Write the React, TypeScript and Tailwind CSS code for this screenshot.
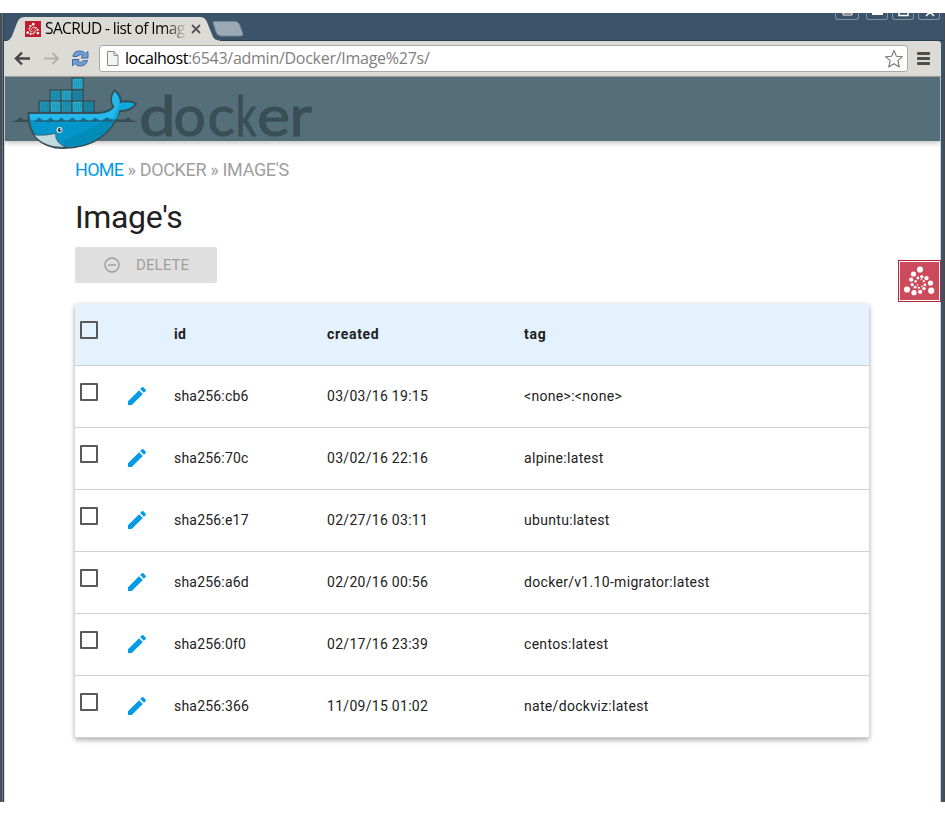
import React from "react";

const rows = [
  ["sha256:cb6", "03/03/16 19:15", "<none>:<none>"],
  ["sha256:70c", "03/02/16 22:16", "alpine:latest"],
  ["sha256:e17", "02/27/16 03:11", "ubuntu:latest"],
  ["sha256:a6d", "02/20/16 00:56", "docker/v1.10-migrator:latest"],
  ["sha256:0f0", "02/17/16 23:39", "centos:latest"],
  ["sha256:366", "11/09/15 01:02", "nate/dockviz:latest"],
];

const cols = "grid grid-cols-[45px_49px_153px_197px_1fr]";

const swirlDots = [
  [19.5, 7.5, 3.1], [13, 12, 2.6], [10.7, 17.7, 2.1], [11.7, 22.6, 1.6], [14.6, 25.2, 1.4], [18.3, 25.8, 1.1],
  [6.5, 27.5, 3.1], [13.5, 30.7, 2.6], [19.7, 29.8, 2.1], [23.5, 26.6, 1.7], [24.4, 22.8, 1.4], [23.2, 19.2, 1.1],
  [30.7, 28.7, 3.1], [30, 21, 2.6], [26, 16.2, 2.1], [21.3, 14.8, 1.7], [17.4, 16, 1.4], [15.1, 19.3, 1.2],
  [20.8, 17.5, 0.8], [17, 23, 0.8], [21.5, 24.3, 0.9],
];

function Swirl({ className }: { className: string }) {
  return (
    <svg viewBox="0 0 38 38" className={className}>
      {swirlDots.map(([x, y, r], i) => (
        <circle key={i} cx={x} cy={y} r={r} fill="#fff" />
      ))}
    </svg>
  );
}

function Box() {
  return <span className="ml-[5px] mt-[17px] block h-[18px] w-[18px] rounded-[1px] border-2 border-[#5a5a5a]" />;
}

function DockerLogo() {
  const crates = [
    [72, 78, "#27b2d4"],
    [50, 90, "#1e96b5"], [61, 90, "#27a9cb"], [72, 90, "#1b85a3"],
    [39, 101, "#1e96b5"], [50, 101, "#27b2d4"], [61, 101, "#1e96b5"], [72, 101, "#27b2d4"], [83, 101, "#1b85a3"],
  ] as const;
  return (
    <svg width="320" height="83" viewBox="0 77 320 83" className="absolute left-[-5px] top-0 z-10">
      <path d="M12 121.300Q17 121 20.500 117Q23 121 27 119.500H121Q126 120 128 117Q131 121 137 121.300V122H12Z" fill="#394d54" />
      {crates.map(([x, y, c], i) => (
        <g key={i}>
          <rect x={x} y={y} width="11.200" height="11.400" fill={c} stroke="#394d54" strokeWidth="1.300" />
          <path d={`M${x + 2.8} ${y + 2}v7.500m2-7.500v7.500m2-7.500v7.500m2-7.500v7.500`} stroke="#147893" strokeWidth=".6" />
        </g>
      ))}
      <path d="M28.500 113H98Q108 112.500 113.500 107C109.500 101 111.500 94 114.500 90.500Q120.500 94 121 102Q129 100 136 103.500Q132 111 120 111C112 133 94 148.200 63 148.200C40 148 28 134 28.500 113Z" fill="#0495cb" stroke="#394d54" strokeWidth="1.800" />
      <path d="M63 147C93 147 110 133 118 111L112 112Q105 124 65 140Z" fill="#008bb8" />
      <path d="M29.500 114H98Q111 113 114.500 107C110.500 101 112 95 114.700 92Q119.500 96 119.500 104Q128 101.500 134 104Q130 109.500 119.500 109.500L117 118.500Q111 120 106.500 117Q101 123 95.500 117.500Q89 123 83.500 117.500Q78 123 72.500 117.500Q66 123 61.500 117.500Q56 123 50.500 117.500Q45 123 39 117.500Q34 122 30 119Z" fill="#24b8eb" />
      <path d="M119 105Q128 101.500 134 104Q130 109.500 119 109.500L117 118L113 119Z" fill="#0ba8de" />
      <path d="M29 121.500Q35 122.500 39 118Q45 123.500 50.500 118Q56 123.500 61.500 118Q66 123.500 72.500 118Q78 123.500 83.500 118Q89 123.500 95.500 118Q101 123.500 106.500 118Q111 121 116 120.500L115.500 121.800H29Z" fill="#24627a" />
      <path d="M34 135Q46 136 55.500 133.500Q55 143 66 147C52 148 41 144 34 135Z" fill="#bfdbe0" stroke="#394d54" strokeWidth=".7" />
      <circle cx="59.500" cy="130" r="3" fill="#d7e8ec" />
      <circle cx="59.700" cy="130" r="1.900" fill="#283e48" />
      <circle cx="60.500" cy="129.400" r=".6" fill="#fff" />
      <g className="font-['Lato']" fontSize="57" fill="#3a4e55" stroke="#3a4e55" strokeWidth="1" strokeLinejoin="round">
        <text transform="translate(139 135.500) scale(1.150 1)">d</text>
        <text x="173.500" y="135.500">o</text>
        <text x="207.500" y="135.500">c</text>
        <text transform="translate(236 135.500) scale(.7 1)">k</text>
        <text transform="translate(257 135.500) scale(1.100 1)">e</text>
        <text transform="translate(289.500 135.500) scale(1.080 1)">r</text>
      </g>
    </svg>
  );
}

function WindowButton({ children, wide }: { children: React.ReactNode; wide?: boolean }) {
  return (
    <div className={`h-[7px] overflow-hidden rounded-b-[3px] border border-t-0 border-[#7e93a4] ${wide ? "mr-[3px] w-[24px]" : "w-[22px]"}`}>
      <svg width="22" height="7" viewBox="0 0 22 7" fill="none">{children}</svg>
    </div>
  );
}

export default function App() {
  return (
    <div className="flex h-[815px] w-[945px] flex-col overflow-hidden bg-white pt-[13px] font-['Roboto','Liberation_Sans',sans-serif] text-[#212121]">
      <div className="flex h-[789px] shrink-0 bg-[#3c546a]">
        <div className="w-[2px] shrink-0 bg-[#4b4d50]" />
        <div className="w-[2px] shrink-0 border-l border-[#60788c] bg-[#2c435a]" />
        <div className="flex min-w-0 grow flex-col">
          <div className="relative flex h-[28px] shrink-0 border-b border-[#293f53] pl-[41px]">
            <svg width="216" height="29" viewBox="0 0 216 29" className="absolute left-0 top-0" fill="none">
              <path d="M0 29V28.500Q6 28 8 23L13 10Q15 4 20 4H196Q201 4 203 9L209 24Q211 27.500 216 27.500V29Z" fill="#dddbd5" />
            </svg>
            <svg width="250" height="28" viewBox="0 0 250 28" className="absolute left-0 top-0" fill="none">
              <path d="M209.500 11Q208 8.500 211 8.500H231Q234 8.500 235.300 11L238.500 20Q239.500 23 236 23H217Q213.500 23 212 19Z" fill="#9caab6" stroke="#71869a" />
              <path d="M188 12l8 8m0-8l-8 8" stroke="#555" strokeWidth="1.800" />
            </svg>
            <div className="relative -ml-[20px] mt-[8px] h-[16px] w-[16px] bg-[#be1e2d]"><Swirl className="h-[16px] w-[16px]" /></div>
            <div className="relative ml-[4px] mt-[4px] whitespace-nowrap bg-linear-to-r from-black from-82% to-[#c8c6c1] bg-clip-text font-['Open_Sans'] text-[15.500px] leading-[22px] tracking-[-0.600px] text-transparent">SACRUD - list of Imag</div>
            <div className="relative ml-auto mr-[4px] flex gap-[4px]">
              <WindowButton wide><path d="M7 0H16V2H7Z" fill="#222" stroke="#fff" /></WindowButton>
              <WindowButton><path d="M5 1H16" stroke="#fff" strokeWidth="2" /></WindowButton>
              <WindowButton><path d="M6 0V2.500H15V0" stroke="#fff" strokeWidth="1.500" /></WindowButton>
              <WindowButton><path d="M7 3L11 -1L15 3" stroke="#fff" strokeWidth="1.500" /></WindowButton>
            </div>
          </div>
          <div className="mr-[3px] flex h-[36px] shrink-0 items-center rounded-tr-[3px] border-b border-[#aaa9a4] bg-[#dddbd5]">
            <svg width="95" height="34" viewBox="0 0 95 34" fill="none">
              <path d="M26 16.500H13M18 10.500L12 16.500L18 22.500" stroke="#454545" strokeWidth="2.400" />
              <path d="M40 16.500H53M48.500 11L54 16.500L48.500 22" stroke="#b3b2af" strokeWidth="2" />
              <g transform="translate(0 -1)">
                <path d="M69 15.500V15Q70 10 75.500 10Q79.500 10 81.500 12.500L84 10.500V17H77L79 14.500Q76 12 73 15.500Z" fill="#6fa0da" stroke="#41689c" />
                <path d="M83.500 19.500Q82 25 76 25Q72.500 25 71 22.500L68.500 25V18.500H75L73.500 20.500Q77 23 79.500 19.500Z" fill="#6fa0da" stroke="#41689c" />
              </g>
            </svg>
            <div className="flex h-[27px] w-[809px] items-center rounded-[3px] border border-[#aaa9a5] bg-white pl-[7px] pr-[3px]">
              <svg width="12" height="16" viewBox="0 0 12 16" fill="#f3f3f3" stroke="#898989"><path d="M.500.500H7L11 4.500V14.500H.500ZM7 .500V4.500H11" /></svg>
              <span className="mb-[2px] ml-[6px] whitespace-nowrap font-['Open_Sans'] text-[16px] leading-[22px] text-[#808080]"><span className="tracking-[-0.460px] text-black">localhost</span><span className="tracking-[-0.270px]">:6543/admin/Docker/Image%27s/</span></span>
              <svg className="ml-auto" width="20" height="20" viewBox="0 0 20 20" fill="white" stroke="#777" strokeWidth="1.100" strokeLinejoin="round"><path d="M10 1.500L12.400 7.300L18.500 7.700L13.800 11.700L15.300 18L10 14.700L4.700 18L6.200 11.700L1.500 7.700L7.600 7.300Z" /></svg>
            </div>
            <div className="mb-[1px] ml-[9px] flex w-[13px] flex-col gap-[2px]">
              <span className="h-[3px] rounded-[1px] bg-[#4d4f4d]" /><span className="h-[3px] rounded-[1px] bg-[#4d4f4d]" /><span className="h-[3px] rounded-[1px] bg-[#4d4f4d]" />
            </div>
          </div>
          <div className="relative mr-[3px] flex grow flex-col border-x border-l-[#dddbd5] border-r-[#d6d5d1] bg-white">
            <header className="relative h-[64px] shrink-0 bg-[#546e7a] shadow-[0_2px_5px_rgba(0,0,0,0.26)]"><DockerLogo /></header>
            <main className="ml-[70px] w-[794px]">
              <nav className="mt-[18px] h-[22px] whitespace-nowrap text-[18px] leading-[22px] tracking-[-0.340px] text-[#9e9e9e]"><span className="tracking-[-0.700px] text-[#039be5]">HOME</span> » DOCKER » IMAGE&apos;S</nav>
              <h1 className="mt-[16px] h-[40px] text-[32px] leading-[40px] tracking-[-0.350px]">Image&apos;s</h1>
              <button className="mt-[10px] flex h-[36px] w-[142px] items-center rounded-[2px] bg-[#dfdfdf] pl-[29px] text-[15px] tracking-[0.100px] text-[#9f9f9f]">
                <svg width="16" height="16" viewBox="0 0 16 16" fill="none" stroke="#9f9f9f" strokeWidth="1.500"><circle cx="8" cy="8" r="7" /><path d="M4 8H12" /></svg>
                <span className="ml-[16px]">DELETE</span>
              </button>
              <div className="mt-[21px] h-[434px] overflow-hidden rounded-[2px] text-[14px] shadow-[0_2px_5px_rgba(0,0,0,0.26),0_1px_6px_rgba(0,0,0,0.12)]">
                <div className={`${cols} h-[62px] border-b border-[#d0d0d0] bg-[#e3f2fd] font-bold leading-[60px] tracking-[0.700px]`}>
                  <Box /><span /><span className="pl-[5px] tracking-[0.400px]">id</span><span className="pl-[5px]">created</span><span className="pl-[5px]">tag</span>
                </div>
                {rows.map(([id, created, tag]) => (
                  <div key={id} className={`${cols} h-[62px] border-b border-[#d0d0d0] leading-[60px]`}>
                    <Box />
                    <svg className="ml-[5px] mt-[18px]" width="24" height="24" viewBox="0 0 24 24" fill="#039be5"><path d="M3 17.250V21h3.750L17.810 9.940l-3.750-3.750L3 17.250zM20.710 7.040a1 1 0 0 0 0-1.410l-2.340-2.340a1 1 0 0 0-1.410 0l-1.830 1.830 3.750 3.750 1.830-1.830z" /></svg>
                    <span className="pl-[5px] tracking-[0.200px]">{id}</span><span className="pl-[5px] tracking-[0.290px]">{created}</span><span className="pl-[5px] tracking-[0.310px]">{tag}</span>
                  </div>
                ))}
              </div>
            </main>
            <div className="absolute right-[-1px] top-[183px] h-[42px] w-[43px] border border-[#b92435] bg-white p-[1px]">
              <div className="h-[38px] w-[39px] bg-[#cb4b5d]"><Swirl className="h-[38px] w-[39px]" /></div>
            </div>
          </div>
        </div>
        <div className="w-px shrink-0 bg-[#49494b]" />
      </div>
    </div>
  );
}
